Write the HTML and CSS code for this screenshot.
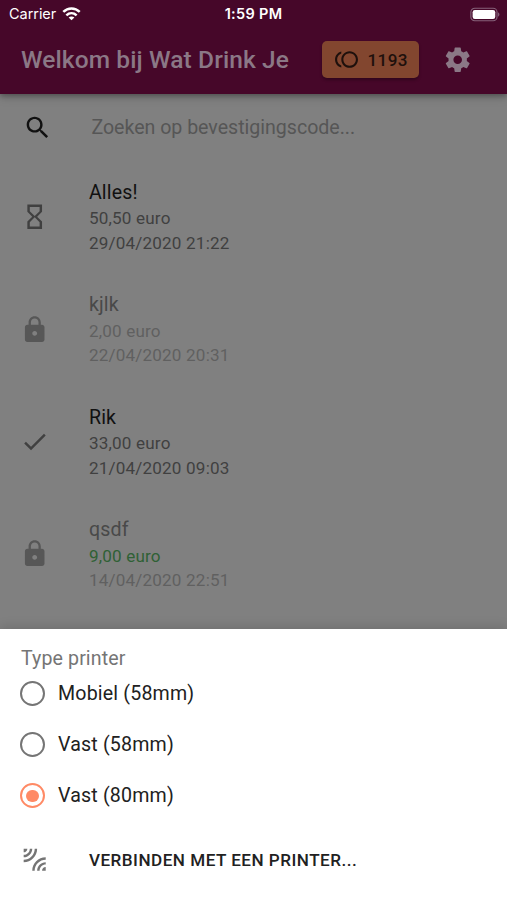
FILE: index.html
```html
<!DOCTYPE html>
<html lang="nl">
<head>
<meta charset="utf-8">
<title>Wat Drink Je</title>
<link rel="stylesheet" href="styles.css">
</head>
<body>
<div class="app">
  <header class="appbar">
    <div class="status">
      <div class="carrier"><span>Carrier</span>
        <svg class="wifi" viewBox="0 0 20 15" fill="none" stroke="#fff" stroke-width="2.7"><path d="M1.2 5.3C6.2.4 13.8.4 18.8 5.3M4.5 9C7.7 6 12.3 6 15.5 9"/><path d="M10 14.3 6.9 11.3C8.6 9.7 11.4 9.7 13.1 11.3Z" fill="#fff" stroke="none"/></svg>
      </div>
      <span class="clock">1:59 PM</span>
      <div class="power"><svg class="battery" viewBox="0 0 31 15"><rect x=".9" y="1" width="27" height="13" rx="4" fill="none" stroke="#86627a" stroke-width="1.2"/><rect x="2.7" y="2.8" width="23.4" height="9.4" rx="2.3" fill="#fff"/><path d="M29 5.3c1.9.8 1.9 3.6 0 4.4z" fill="#86627a"/></svg></div>
    </div>
    <div class="toolbar">
      <h1>Welkom bij Wat Drink Je</h1>
      <button class="tokens">
        <svg viewBox="0 0 24 24"><path d="M15 4c-4.42 0-8 3.58-8 8s3.58 8 8 8 8-3.58 8-8-3.58-8-8-8zm0 14c-3.31 0-6-2.69-6-6s2.69-6 6-6 6 2.69 6 6-2.69 6-6 6zM3 12c0-2.61 1.67-4.83 4-5.65V4.26C3.55 5.15 1 8.27 1 12s2.55 6.85 6 7.74v-2.09c-2.33-.82-4-3.04-4-5.65z"/></svg>
        <span>1193</span>
      </button>
      <svg class="gear" viewBox="0 0 24 24"><path d="M19.43 12.98c.04-.32.07-.64.07-.98s-.03-.66-.07-.98l2.11-1.65c.19-.15.24-.42.12-.64l-2-3.46c-.12-.22-.39-.3-.61-.22l-2.49 1c-.52-.4-1.08-.73-1.69-.98l-.38-2.65C14.46 2.18 14.25 2 14 2h-4c-.25 0-.46.18-.49.42l-.38 2.65c-.61.25-1.17.59-1.69.98l-2.49-1c-.23-.09-.49 0-.61.22l-2 3.46c-.13.22-.07.49.12.64l2.11 1.65c-.04.32-.07.65-.07.98s.03.66.07.98l-2.11 1.65c-.19.15-.24.42-.12.64l2 3.46c.12.22.39.3.61.22l2.49-1c.52.4 1.08.73 1.69.98l.38 2.65c.03.24.24.42.49.42h4c.25 0 .46-.18.49-.42l.38-2.65c.61-.25 1.17-.59 1.69-.98l2.49 1c.23.09.49 0 .61-.22l2-3.46c.12-.22.07-.49-.12-.64l-2.11-1.65zM12 15.5c-1.93 0-3.5-1.57-3.5-3.5s1.57-3.5 3.5-3.5 3.5 1.57 3.5 3.5-1.57 3.5-3.5 3.5z"/></svg>
    </div>
  </header>
  <main class="content">
    <div class="search">
      <svg viewBox="0 0 24 24"><path d="M15.5 14h-.79l-.28-.27C15.41 12.59 16 11.11 16 9.5 16 5.91 13.09 3 9.5 3S3 5.91 3 9.5 5.91 16 9.5 16c1.61 0 3.09-.59 4.23-1.57l.27.28v.79l5 4.99L20.49 19l-4.99-5zm-6 0C7.01 14 5 11.99 5 9.5S7.01 5 9.5 5 14 7.01 14 9.5 11.99 14 9.5 14z"/></svg>
      <span>Zoeken op bevestigingscode...</span>
    </div>
    <ul class="orders">
      <li class="order">
        <svg viewBox="0 0 24 24"><path d="M6 2v6h.01L6 8.01 10 12l-4 4 .01.01H6V22h12v-5.99h-.01L18 16l-4-4 4-3.99-.01-.01H18V2H6zm10 14.5V20H8v-3.5l4-4 4 4zm-4-5l-4-4V4h8v3.5l-4 4z"/></svg>
        <div><h2>Alles!</h2><p>50,50 euro</p><p>29/04/2020 21:22</p></div>
      </li>
      <li class="order locked">
        <svg viewBox="0 0 24 24"><path d="M18 8h-1V6c0-2.76-2.24-5-5-5S7 3.24 7 6v2H6c-1.1 0-2 .9-2 2v10c0 1.1.9 2 2 2h12c1.1 0 2-.9 2-2V10c0-1.1-.9-2-2-2zm-6 9c-1.1 0-2-.9-2-2s.9-2 2-2 2 .9 2 2-.9 2-2 2zm3.1-9H8.9V6c0-1.71 1.39-3.1 3.1-3.1s3.1 1.39 3.1 3.1v2z"/></svg>
        <div><h2>kjlk</h2><p>2,00 euro</p><p>22/04/2020 20:31</p></div>
      </li>
      <li class="order">
        <svg viewBox="0 0 24 24"><path d="M9 16.17 4.83 12l-1.42 1.41L9 19 21 7l-1.41-1.41z"/></svg>
        <div><h2>Rik</h2><p>33,00 euro</p><p>21/04/2020 09:03</p></div>
      </li>
      <li class="order locked">
        <svg viewBox="0 0 24 24"><path d="M18 8h-1V6c0-2.76-2.24-5-5-5S7 3.24 7 6v2H6c-1.1 0-2 .9-2 2v10c0 1.1.9 2 2 2h12c1.1 0 2-.9 2-2V10c0-1.1-.9-2-2-2zm-6 9c-1.1 0-2-.9-2-2s.9-2 2-2 2 .9 2 2-.9 2-2 2zm3.1-9H8.9V6c0-1.71 1.39-3.1 3.1-3.1s3.1 1.39 3.1 3.1v2z"/></svg>
        <div><h2>qsdf</h2><p class="paid">9,00 euro</p><p>14/04/2020 22:51</p></div>
      </li>
    </ul>
  </main>
  <section class="sheet">
    <div class="legend">Type printer</div>
    <div class="option"><i class="radio"></i><span>Mobiel (58mm)</span></div>
    <div class="option"><i class="radio"></i><span>Vast (58mm)</span></div>
    <div class="option"><i class="radio on"></i><span>Vast (80mm)</span></div>
    <div class="connect">
      <svg viewBox="0 0 24 24"><path d="M6 3H3v3c1.66 0 3-1.34 3-3zm8 0h-2c0 4.97-4.03 9-9 9v2c6.08 0 11-4.93 11-11zm-4 0H8c0 2.76-2.24 5-5 5v2c3.87 0 7-3.13 7-7zm0 18h2c0-4.97 4.03-9 9-9v-2c-6.07 0-11 4.93-11 11zm8 0h3v-3c-1.66 0-3 1.34-3 3zm-4 0h2c0-2.76 2.24-5 5-5v-2c-3.87 0-7 3.13-7 7z"/></svg>
      <span>VERBINDEN MET EEN PRINTER...</span>
    </div>
  </section>
</div>
</body>
</html>
```
FILE: styles.css
```css
* { box-sizing: border-box; margin: 0; padding: 0; }
body { font-family: Roboto, sans-serif; background: #808080; }
svg { display: block; flex: none; fill: currentColor; width: 29.4px; height: 29.4px; }
.app { width: 507px; height: 900px; display: flex; flex-direction: column; overflow: hidden; }

.appbar { height: 94px; flex: none; background: #460729; box-shadow: 0 2px 5px rgba(0,0,0,.28), 0 3px 10px rgba(0,0,0,.16); }
.status { height: 26px; padding: 2px 7px 0 9px; display: grid; grid-template-columns: 1fr auto 1fr; align-items: center; color: #fff; font: 500 14.5px/24px Inter, sans-serif; }
.carrier { display: flex; align-items: center; gap: 6px; font-weight: 400; letter-spacing: -.05px; }
svg.wifi { width: 19px; height: 14px; fill: none; }
.clock { font-weight: 600; font-size: 14.5px; letter-spacing: .3px; margin-right: 2px; }
.power { display: flex; justify-content: flex-end; }
svg.battery { width: 30px; height: 15px; }
.toolbar { height: 67px; padding: 0 35px 0 21px; display: flex; align-items: center; }
h1 { flex: 1; font-size: 24.5px; font-weight: 500; line-height: 39px; letter-spacing: .1px; color: #8b7886; white-space: nowrap; }
.tokens { width: 97px; height: 37px; border: 0; border-radius: 5px; background: #82462f; color: #1e100c; display: flex; align-items: center; padding-left: 12px; gap: 9px; font: 500 17.1px/30px Roboto, sans-serif; letter-spacing: .3px; box-shadow: 0 2px 3px rgba(0,0,0,.3); margin-right: 24px; }
.tokens svg { width: 25px; height: 25px; }
.gear { color: #8b7886; }

.content { flex: 1; min-height: 0; }
.search { height: 67px; padding-left: 22.5px; display: flex; align-items: center; gap: 39.5px; font-size: 19.6px; letter-spacing: -.02px; color: #565656; }
.search svg { color: #111; }
.orders { list-style: none; }
.order { height: 112.4px; padding: 16px 0 0 20px; display: flex; gap: 39.5px; color: #404040; }
.order svg { margin-top: 25.2px; }
.order h2 { font-size: 19.6px; font-weight: 400; line-height: 29.4px; padding-top: 1px; margin-bottom: -1px; letter-spacing: .18px; color: #111; }
.order p { font-size: 17.1px; line-height: 24.5px; letter-spacing: .18px; }
.order.locked { color: #606060; }
.order.locked h2 { color: #494949; }
.order.locked svg { color: #575757; }
.order .paid { color: #2f6135; }

.sheet { height: 271px; flex: none; background: #fff; padding: 17px 20px 0; position: relative; box-shadow: 0 -3px 10px rgba(0,0,0,.12); }
.legend { height: 24px; line-height: 25px; font-size: 19.6px; letter-spacing: .1px; color: #757575; padding-left: 1px; }
.option { height: 51.2px; display: flex; align-items: center; gap: 13px; font-size: 19.6px; letter-spacing: .18px; color: #212121; padding-bottom: 4px; }
.radio { width: 25px; height: 25px; border: 2.5px solid #757575; border-radius: 50%; display: grid; place-items: center; }
.radio.on { border-color: #ff8a65; }
.radio.on::after { content: ""; width: 12.5px; height: 12.5px; border-radius: 50%; background: #ff8a65; }
.connect { display: flex; align-items: center; gap: 39.5px; margin-top: 21.6px; height: 30px; color: #212121; font-size: 17.1px; font-weight: 500; letter-spacing: .49px; }
.connect svg { color: #757575; }
```
